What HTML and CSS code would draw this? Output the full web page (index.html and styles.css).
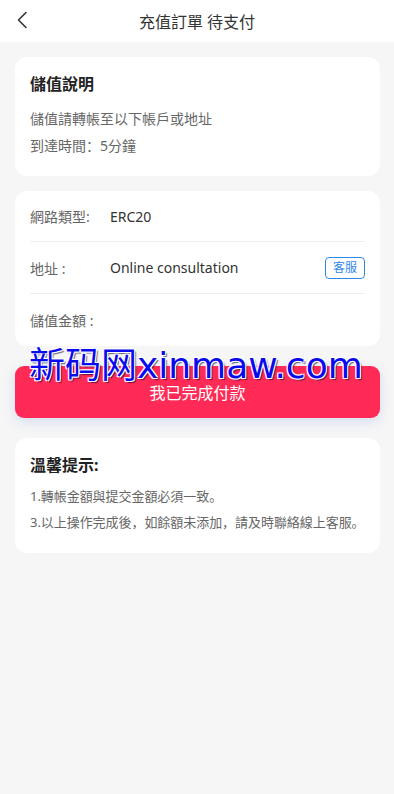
FILE: index.html
```html
<!DOCTYPE html>
<html lang="zh">
<head>
<meta charset="utf-8">
<meta name="viewport" content="width=device-width, initial-scale=1">
<title>充值訂單 待支付</title>
<link rel="stylesheet" href="styles.css">
</head>
<body>
<header class="nav">
  <svg class="back" width="12" height="18" viewBox="0 0 12 18"><path d="M10 1.5 L2.5 9 L10 16.5" fill="none" stroke="#333" stroke-width="1.6" stroke-linecap="round" stroke-linejoin="round"/></svg>
  <h1 class="nav-title">充值訂單 待支付</h1>
</header>
<main class="content">
  <section class="card intro">
    <h2 class="card-title">儲值說明</h2>
    <p class="desc">儲值請轉帳至以下帳戶或地址</p>
    <p class="desc">到達時間：5分鐘</p>
  </section>
  <section class="card info">
    <div class="row">
      <span class="label">網路類型:</span>
      <span class="value">ERC20</span>
    </div>
    <div class="row">
      <span class="label">地址 :</span>
      <span class="value">Online consultation</span>
      <button class="service">客服</button>
    </div>
    <div class="row">
      <span class="label">儲值金額 :</span>
      <span class="value"></span>
    </div>
  </section>
  <div class="btn-wrap">
    <button class="pay">我已完成付款</button>
    <div class="watermark">新码网xinmaw.com</div>
  </div>
  <section class="card tips">
    <h2 class="card-title">溫馨提示:</h2>
    <p class="tip">1.轉帳金額與提交金額必須一致。</p>
    <p class="tip">3.以上操作完成後，如餘額未添加，請及時聯絡線上客服。</p>
  </section>
</main>
</body>
</html>
```
FILE: styles.css
```css
* { box-sizing: border-box; }
html, body { margin: 0; padding: 0; }
body {
  background: #f6f6f6;
  font-family: "Noto Sans", "Noto Sans CJK SC", sans-serif;
  color: #333;
  min-height: 794px;
}
.nav {
  height: 42px;
  background: #fff;
  display: flex;
  align-items: center;
  justify-content: center;
  position: relative;
}
.back {
  position: absolute;
  left: 16px;
  top: 11px;
}
.nav-title {
  margin: 0;
  font-size: 16px;
  font-weight: 400;
  color: #333;
}
.content {
  padding: 15px 14px 0 15px;
  display: flex;
  flex-direction: column;
}
.card {
  background: #fff;
  border-radius: 12px;
}
.intro {
  padding: 15px 15px 12px 15px;
  height: 119px;
}
.card-title {
  margin: 0 0 9px;
  font-size: 16px;
  font-weight: 700;
  color: #222;
  line-height: 24px;
}
.desc {
  margin: 0;
  font-size: 14px;
  color: #666;
  line-height: 27px;
}
.info {
  margin-top: 15px;
  padding: 0 15px;
  height: 155px;
}
.row {
  display: flex;
  align-items: center;
  height: 52px;
  border-bottom: 1px solid #eee;
  font-size: 14px;
}
.row:first-child { height: 51px; }
.row:last-child { border-bottom: none; }
.label {
  width: 80px;
  color: #666;
}
.value {
  flex: 1;
  color: #333;
}
.service {
  border: 1px solid #2f88e8;
  background: #fff;
  color: #2f88e8;
  border-radius: 4px;
  font-family: inherit;
  font-size: 12px;
  line-height: 18px;
  padding: 1px 7px;
  margin: 0;
}
.btn-wrap {
  position: relative;
  margin-top: 20px;
}
.pay {
  width: 100%;
  height: 52px;
  border: none;
  border-radius: 9px;
  background: #ff2a55;
  color: #fff;
  font-family: inherit;
  font-size: 16px;
  box-shadow: 0 4px 12px rgba(120, 150, 220, 0.25);
  padding: 0;
  display: block;
}
.watermark {
  position: absolute;
  left: 14px;
  top: -20px;
  font-family: "DejaVu Sans", "Noto Sans CJK SC", sans-serif;
  font-size: 36px;
  line-height: 40px;
  letter-spacing: 0;
  color: #0a0aee;
  text-shadow: 1px 1px 0 #fff, -1px -1px 0 #fff, 1px -1px 0 #fff, -1px 1px 0 #fff, 2px 2px 1px rgba(0,0,60,0.6);
  white-space: nowrap;
  pointer-events: none;
}
.tips {
  margin-top: 20px;
  padding: 15px 15px 14px;
  height: 115px;
}
.tips .card-title { margin-bottom: 6px; }
.tip {
  margin: 0;
  font-size: 13px;
  color: #666;
  line-height: 26px;
  letter-spacing: -0.05px;
  white-space: nowrap;
}
```
